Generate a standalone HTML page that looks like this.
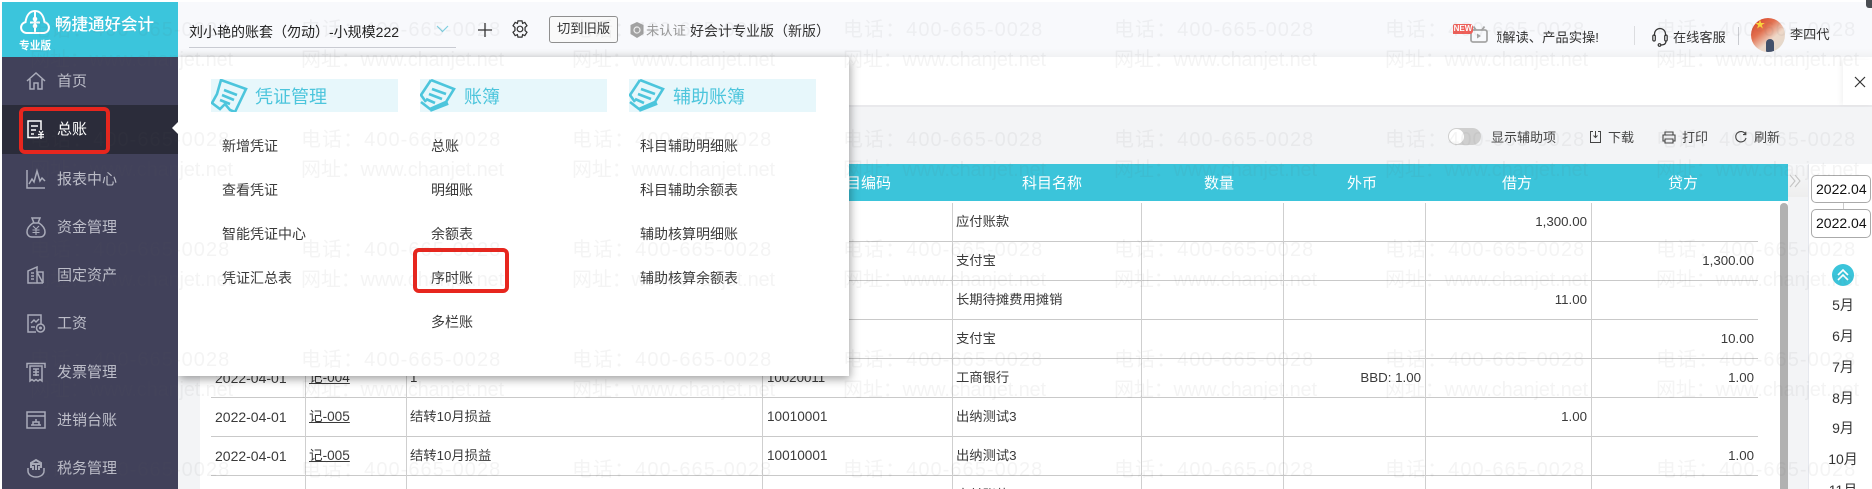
<!DOCTYPE html>
<html lang="zh"><head><meta charset="utf-8"><title>畅捷通好会计</title>
<style>
*{box-sizing:border-box;margin:0;padding:0}
html,body{width:1872px;height:489px;overflow:hidden;background:#fff;font-family:"Liberation Sans","Noto Sans CJK SC",sans-serif;color:#333}
#page{position:relative;width:1872px;height:489px;overflow:hidden}
.a{position:absolute}
.t{position:absolute;white-space:nowrap;line-height:20px;height:20px}
svg{position:absolute;overflow:visible}
.h{background:#c9c9c9;height:1px;left:211px;width:1547px}
.v{background:#cfcfcf;width:1px;top:203px;height:286px}
.c{font-size:13.3px;color:#3a3a3a}
.r{font-size:13.3px;color:#3a3a3a;text-align:right;width:120px}
.d{font-size:14px;left:215px;color:#3a3a3a}
.u{font-size:13.6px;left:309px;text-decoration:underline;color:#3a3a3a}
.th{color:#fff;font-size:15px;top:174px}
.m{font-size:14px;color:#3a3a3a}
.sec{position:absolute;top:79px;height:33px;width:187px;background:#e7f7fb;overflow:hidden}
.sec b{position:absolute;top:7px;font-weight:400;font-size:18px;line-height:22px;color:#4cc5dc;white-space:nowrap}
.sec svg{fill:none;stroke:#4cc5dc;stroke-width:2.6;left:0;top:0}
.mon{left:1818px;width:50px;text-align:center;font-size:14px;color:#333}
.box{position:absolute;border:4px solid #e7261e;border-radius:6px}
.tool{font-size:13px;color:#444}
#wm{position:absolute;left:0;top:0;width:1872px;height:489px;overflow:hidden;pointer-events:none;z-index:50}
#wm div{position:absolute;left:-241px;white-space:nowrap;font-size:20px;line-height:24px;color:rgba(95,95,105,.07)}
#wm .p{letter-spacing:1.05px}
#wm .w{letter-spacing:-.15px}
#wm span{display:inline-block;width:271px}
#sideinner svg.i{fill:none;stroke:#a9abb9;stroke-width:1.5;left:26px}
#sideinner .n{color:#bcbdc8;font-size:15px;left:57px}
</style></head><body>
<div id="page">

<!-- base layers -->
<div class="a" style="left:178px;top:2px;width:1694px;height:55px;background:linear-gradient(#f8f9fc 85%,#f1f2f4)"></div>
<div class="a" style="left:178px;top:57px;width:1694px;height:48px;background:#fff"></div>
<div class="a" style="left:178px;top:105px;width:1694px;height:2px;background:#e9e9ec"></div>
<div class="a" style="left:178px;top:107px;width:1694px;height:382px;background:#f3f4f6"></div>
<div class="a" style="left:200px;top:164px;width:1588px;height:325px;background:#fff"></div>
<div class="a" style="left:1843px;top:60px;width:29px;height:45px;background:#fff;box-shadow:-3px 0 4px rgba(0,0,0,.04)"></div>
<div class="a" style="left:1866px;top:0;width:6px;height:8px;background:#4a4d52;border-radius:0 0 0 3px"></div>

<!-- top bar -->
<div class="t" style="left:189px;top:22px;font-size:14px;color:#222">刘小艳的账套（勿动）-小规模222</div>
<div class="a" style="left:189px;top:47px;width:267px;height:1px;background:#c9cbd2"></div>
<svg style="left:436px;top:25px" width="13" height="8" fill="none" stroke="#7fd0e2" stroke-width="1.2"><path d="M1 1l5.5 5.5L12 1"/></svg>
<svg style="left:478px;top:23px" width="14" height="14" fill="none" stroke="#333" stroke-width="1.3"><path d="M7 0v14M0 7h14"/></svg>
<svg style="left:511px;top:20px" width="18" height="18" viewBox="0 0 16 16" fill="none" stroke="#333" stroke-width="1.1"><path d="M6.2.8h3.6l.5 2.2 2-.9 1.9 3-1.7 1.5v2.8l1.7 1.5-1.9 3-2-.9-.5 2.2H6.2l-.5-2.2-2 .9-1.9-3 1.7-1.5V6.6L1.800 5.100l1.900-3 2 .9z"/><circle cx="8" cy="8" r="2.5"/></svg>
<div class="a" style="left:549px;top:16px;width:69px;height:27px;border:1px solid #8f8f8f;border-radius:3px;background:#f9f9f9"></div>
<div class="t" style="left:557px;top:19px;font-size:13.3px;color:#333">切到旧版</div>
<svg style="left:630px;top:22px" width="14" height="16" viewBox="0 0 14 16"><path d="M7 0l6.5 3v9L7 16 .5 12V3z" fill="#a2a2a2"/><circle cx="7" cy="8" r="3" fill="none" stroke="#eee" stroke-width="1.2"/></svg>
<div class="t" style="left:646px;top:21px;font-size:13.3px;color:#999">未认证</div>
<div class="t" style="left:690px;top:21px;font-size:14px;color:#333">好会计专业版（新版）</div>

<svg style="left:1470px;top:25px" width="18" height="18" viewBox="0 0 18 18" fill="none" stroke="#a5a5a5" stroke-width="1.8"><rect x="1" y="5" width="16" height="12" rx="2"/><path d="M6 5L3.500 1.500M12 5l2.500-3.500"/><path d="M7 8.500l4 2.500-4 2.500z" fill="#a5a5a5" stroke="none"/></svg>
<div class="a" style="left:1453px;top:24px;width:20px;height:10px;background:#f0605a;border-radius:2px 3px 3px 0;color:#fff;font-size:8px;line-height:10px;font-weight:700;text-align:center">NEW</div>
<div class="a" style="left:1497px;top:28px;width:102px;height:20px;overflow:hidden"><div class="t" style="right:0;font-size:13.3px;color:#333">视频解读、产品实操!</div></div>
<div class="a" style="left:1634px;top:26px;width:1px;height:19px;background:#dcdde0"></div>
<svg style="left:1652px;top:27px" width="16" height="21" viewBox="0 0 16 21" fill="none" stroke="#333" stroke-width="1.2"><path d="M2.500 9V7a5.500 5.500 0 0 1 11 0v2"/><rect x=".8" y="8" width="2.500" height="6" rx="1.200"/><rect x="12.700" y="8" width="2.500" height="6" rx="1.200"/><path d="M14 14c0 3-2 4-5 4"/><circle cx="7.500" cy="18" r="1.300"/></svg>
<div class="t" style="left:1673px;top:28px;font-size:13.2px;color:#333">在线客服</div>
<div class="a" style="left:1738px;top:27px;width:1px;height:18px;background:#c9cbd0"></div>
<div class="a" style="left:1751px;top:18px;width:34px;height:34px;border-radius:50%;overflow:hidden;background:linear-gradient(140deg,#d83a22 0,#e2704f 35%,#eed8c8 62%,#ddd8cc 100%)"><div class="a" style="left:15px;top:21px;width:8px;height:13px;background:#42506a;border-radius:4px 4px 1px 1px"></div><div class="a" style="left:4px;top:3px;color:#f8d33c;font-size:10px;line-height:10px">★</div></div>
<div class="t" style="left:1790px;top:25px;font-size:13.2px;color:#333">李四代</div>

<!-- close -->
<svg style="left:1855px;top:77px" width="10" height="10" fill="none" stroke="#333" stroke-width="1.2"><path d="M0 0l10 10M10 0L0 10"/></svg>

<!-- toolbar -->
<div class="a" style="left:1448px;top:128px;width:33px;height:17px;border-radius:9px;background:#cfcfcf"></div>
<div class="a" style="left:1449px;top:129px;width:15px;height:15px;border-radius:50%;background:#fff"></div>
<div class="t tool" style="left:1491px;top:128px">显示辅助项</div>
<svg style="left:1590px;top:131px" width="11" height="12" viewBox="0 0 11 12" fill="none" stroke="#444" stroke-width="1"><path d="M3 .5H.5v11h10V.5H8M5.500 0v6.500M3.500 4.500l2 2 2-2"/></svg>
<div class="t tool" style="left:1608px;top:128px">下载</div>
<svg style="left:1662px;top:131px" width="14" height="13" viewBox="0 0 14 13" fill="none" stroke="#444" stroke-width="1.1"><path d="M3 4V1h8v3M3 10H1V4h12v6h-2M3 8h8v4H3z"/></svg>
<div class="t tool" style="left:1682px;top:128px">打印</div>
<svg style="left:1735px;top:131px" width="12" height="12" viewBox="0 0 12 12" fill="none" stroke="#444" stroke-width="1.1"><path d="M10.500 3.200A5.200 5.200 0 1 0 11 7M10.800 .8v2.800H8"/></svg>
<div class="t tool" style="left:1754px;top:128px">刷新</div>

<!-- table -->
<div class="a" style="left:200px;top:164px;width:1588px;height:37px;background:#3bc4da"></div>
<div class="t th" style="left:831px">科目编码</div>
<div class="t th" style="left:1022px">科目名称</div>
<div class="t th" style="left:1204px">数量</div>
<div class="t th" style="left:1347px">外币</div>
<div class="t th" style="left:1502px">借方</div>
<div class="t th" style="left:1668px">贷方</div>

<div class="a h" style="top:241px"></div><div class="a h" style="top:280px"></div><div class="a h" style="top:319px"></div><div class="a h" style="top:358px"></div><div class="a h" style="top:397px"></div><div class="a h" style="top:436px"></div><div class="a h" style="top:475px"></div>
<div class="a v" style="left:305px"></div><div class="a v" style="left:406px"></div><div class="a v" style="left:762px"></div><div class="a v" style="left:952px"></div><div class="a v" style="left:1141px"></div><div class="a v" style="left:1283px"></div><div class="a v" style="left:1425px"></div><div class="a v" style="left:1591px"></div>

<div class="t c" style="left:956px;top:212px">应付账款</div><div class="t r" style="left:1467px;top:212px">1,300.00</div>
<div class="t c" style="left:956px;top:251px">支付宝</div><div class="t r" style="left:1634px;top:251px">1,300.00</div>
<div class="t c" style="left:956px;top:290px">长期待摊费用摊销</div><div class="t r" style="left:1467px;top:290px">11.00</div>
<div class="t c" style="left:956px;top:329px">支付宝</div><div class="t r" style="left:1634px;top:329px">10.00</div>
<div class="t d" style="top:368px">2022-04-01</div><div class="t u" style="top:368px">记-004</div><div class="t c" style="left:410px;top:368px">1</div><div class="t c" style="left:767px;top:368px">10020011</div><div class="t c" style="left:956px;top:368px">工商银行</div><div class="t r" style="left:1301px;top:368px">BBD: 1.00</div><div class="t r" style="left:1634px;top:368px">1.00</div>
<div class="t d" style="top:407px">2022-04-01</div><div class="t u" style="top:407px">记-005</div><div class="t c" style="left:410px;top:407px">结转10月损益</div><div class="t c" style="left:767px;top:407px;font-size:13.6px">10010001</div><div class="t c" style="left:956px;top:407px">出纳测试3</div><div class="t r" style="left:1467px;top:407px">1.00</div>
<div class="t d" style="top:446px">2022-04-01</div><div class="t u" style="top:446px">记-005</div><div class="t c" style="left:410px;top:446px">结转10月损益</div><div class="t c" style="left:767px;top:446px;font-size:13.6px">10010001</div><div class="t c" style="left:956px;top:446px">出纳测试3</div><div class="t r" style="left:1634px;top:446px">1.00</div>
<div class="t c" style="left:956px;top:485px">应付账款</div>

<!-- scrollbar + right -->
<div class="a" style="left:1780px;top:203px;width:8px;height:286px;background:#b1b1b1;border-radius:4px 4px 0 0"></div>
<div class="a" style="left:1788px;top:201px;width:20px;height:288px;background:#f3f4f6"></div>
<div class="a" style="left:1788px;top:164px;width:20px;height:33px;background:linear-gradient(#f7f8fa,#eeeeee)"></div>
<svg style="left:1789px;top:175px" width="12" height="12" fill="none" stroke="#c4c4c4" stroke-width="1.1"><path d="M1 0l5 6-5 6M6 0l5 6-5 6"/></svg>
<div class="a" style="left:1808px;top:164px;width:64px;height:325px;background:#fff;border-left:1px solid #e6e8ee"></div>
<div class="a" style="left:1843px;top:200px;width:1px;height:12px;background:#ccc"></div>
<div class="a" style="left:1811px;top:175px;width:60px;height:28px;background:#fff;border:1px solid #aaa;border-radius:5px"></div>
<div class="a" style="left:1811px;top:209px;width:60px;height:29px;background:#fff;border:1px solid #aaa;border-radius:5px"></div>
<div class="t" style="left:1816px;top:179px;font-size:14px;color:#111">2022.04</div>
<div class="t" style="left:1816px;top:213px;font-size:14px;color:#111">2022.04</div>
<div class="a" style="left:1832px;top:264px;width:22px;height:22px;border-radius:50%;background:#3bc4da"></div>
<svg style="left:1837px;top:269px" width="12" height="12" fill="none" stroke="#fff" stroke-width="1.6"><path d="M1 6l5-5 5 5M1 11l5-5 5 5"/></svg>
<div class="t mon" style="top:295px">5月</div><div class="t mon" style="top:326px">6月</div><div class="t mon" style="top:357px">7月</div><div class="t mon" style="top:388px">8月</div><div class="t mon" style="top:418px">9月</div><div class="t mon" style="top:449px">10月</div><div class="t mon" style="top:480px">11月</div>

<!-- dropdown -->
<div class="a" style="left:178px;top:57px;width:671px;height:319px;background:#fff;box-shadow:1px 3px 9px rgba(0,0,0,.38);z-index:5"></div>
<div style="position:absolute;left:0;top:0;z-index:6">
<div class="sec" style="left:211px"><svg width="36" height="33" viewBox="0 0 36 33"><path d="M10 1L35 10 24 33l-5-2-5-6-5 5-8-6 5-9z"/><path d="M13 11l13 5M11 16l12 5M9 21l10 4"/></svg><b style="left:44px">凭证管理</b></div>
<div class="sec" style="left:420px"><svg width="36" height="33" viewBox="0 0 36 33"><path d="M11 1l23 9-8 13-16 7-9-7"/><path d="M11 1L1 16l5 7"/><path d="M12 10l14 5M9 15l13 5M6 20l9 4"/><path d="M10 31l18-7" stroke-width="4"/></svg><b style="left:44px">账簿</b></div>
<div class="sec" style="left:629px"><svg width="36" height="33" viewBox="0 0 36 33"><path d="M11 1l23 9-8 13-16 7-9-7"/><path d="M11 1L1 16l5 7"/><path d="M12 10l14 5M9 15l13 5M6 20l9 4"/><path d="M10 31l18-7" stroke-width="4"/></svg><b style="left:44px">辅助账簿</b></div>
<div class="t m" style="left:222px;top:136px">新增凭证</div><div class="t m" style="left:222px;top:180px">查看凭证</div><div class="t m" style="left:222px;top:224px">智能凭证中心</div><div class="t m" style="left:222px;top:268px">凭证汇总表</div>
<div class="t m" style="left:431px;top:136px">总账</div><div class="t m" style="left:431px;top:180px">明细账</div><div class="t m" style="left:431px;top:224px">余额表</div><div class="t m" style="left:431px;top:268px">序时账</div><div class="t m" style="left:431px;top:312px">多栏账</div>
<div class="t m" style="left:640px;top:136px">科目辅助明细账</div><div class="t m" style="left:640px;top:180px">科目辅助余额表</div><div class="t m" style="left:640px;top:224px">辅助核算明细账</div><div class="t m" style="left:640px;top:268px">辅助核算余额表</div>
<div class="box" style="left:413px;top:248px;width:96px;height:45px"></div>
</div>

<!-- sidebar -->
<div class="a" style="left:2px;top:2px;width:176px;height:487px;z-index:7;background:#41415a"></div>
<div class="a" id="sideinner" style="left:0;top:0;z-index:8">
<div class="a" style="left:2px;top:2px;width:176px;height:55px;background:#3bc5dc"></div>
<svg style="left:20px;top:10px" width="30" height="24" viewBox="0 0 30 24" fill="none" stroke="#fff" stroke-width="2"><path d="M8 23H6.500a5.500 5.500 0 0 1-1-10.900C6.500 5 10 1 15 1s8.500 4 9.500 11.100a5.500 5.500 0 0 1-1 10.900H8z"/><path d="M15 1v22"/><circle cx="15" cy="9" r="2.300" fill="#fff" stroke="none"/><circle cx="15" cy="16" r="2.300" fill="#fff" stroke="none"/><path d="M10 12.500h10"/></svg>
<div class="t" style="left:55px;top:15px;font-size:16.5px;color:#fff;font-weight:500">畅捷通好会计</div>
<div class="t" style="left:19px;top:36px;font-size:10.7px;color:#fff;font-weight:700">专业版</div>
<div class="a" style="left:2px;top:105px;width:176px;height:49px;background:#2b2c3a"></div>
<div class="a" style="left:172px;top:122px;width:0;height:0;border-top:6px solid transparent;border-bottom:6px solid transparent;border-right:6px solid #fff"></div>
<div class="box" style="left:19px;top:107px;width:91px;height:47px;z-index:2"></div>
<svg class="i" style="top:71px" width="20" height="20" viewBox="0 0 20 20"><path d="M1 10L10 2l9 8M4 8v10h4v-6h4v6h4V8"/></svg><div class="t n" style="top:72px">首页</div>
<svg class="i" style="top:119px;stroke:#fff" width="20" height="21" viewBox="0 0 20 21"><path d="M13 18.500H2V2h13v9M5 7h7M5 11h5M5 15h3"/><path d="M13 12l2 2.500 2-2.500M12 15.500h6M12 18h6M15 14.500V20" stroke-width="1.2"/></svg><div class="t n" style="top:120px;color:#fff">总账</div>
<svg class="i" style="top:169px" width="20" height="20" viewBox="0 0 20 20"><path d="M1 1v18h18M3 15l3-5 2 3 3-11 3 10 2-3 3 3"/></svg><div class="t n" style="top:170px">报表中心</div>
<svg class="i" style="top:217px" width="20" height="21" viewBox="0 0 20 21"><path d="M6 1h8l-2 5h-4zM7 6h6c3 2 6 5 6 9 0 3-2 5-5 5H6c-3 0-5-2-5-5 0-4 3-7 6-9z"/><path d="M7 9l3 3 3-3M6.500 13h7M6.500 15.500h7M10 12v6" stroke-width="1.1"/></svg><div class="t n" style="top:218px">资金管理</div>
<svg class="i" style="top:265px" width="20" height="20" viewBox="0 0 20 20"><path d="M2 18V6l9-4v16zM11 7h6v11zM2 18h15M17 7v11M5 8h3M5 11h3M5 14h3"/></svg><div class="t n" style="top:266px">固定资产</div>
<svg class="i" style="top:313px" width="20" height="20" viewBox="0 0 20 20"><path d="M10 19H2V2h13v9M5 10l3-3 2 2 3-3M5 14h4"/><circle cx="14.500" cy="15" r="4"/><circle cx="14.500" cy="15" r="1.500" fill="#a9abb9" stroke="none"/></svg><div class="t n" style="top:314px">工资</div>
<svg class="i" style="top:362px" width="20" height="20" viewBox="0 0 20 20"><path d="M1 6V1.500h18V6M4 4h12v15l-2-1.500-2 1.500-2-1.500L8 19l-2-1.500L4 19zM7 7h6M7 10h6M7 13h6M10 7v7"/></svg><div class="t n" style="top:363px">发票管理</div>
<svg class="i" style="top:410px" width="20" height="20" viewBox="0 0 20 20"><path d="M1 2h18v16H1zM1 6h18M5 15h10M7 15v-3h6v3M10 9v3"/></svg><div class="t n" style="top:411px">进销台账</div>
<svg class="i" style="top:458px" width="20" height="20" viewBox="0 0 20 20"><path d="M2 10v3c0 3.500 3.500 6 8 6s8-2.500 8-6v-3"/><path d="M5 10V5l5-3 5 3v5M4 6h12M7 8v4M13 8v4M10 5v7" stroke-width="2"/></svg><div class="t n" style="top:459px">税务管理</div>
</div>

<!-- watermark -->
<div id="wm">
<div class="p" style="top:18px"><span>电话：400-665-0028</span><span>电话：400-665-0028</span><span>电话：400-665-0028</span><span>电话：400-665-0028</span><span>电话：400-665-0028</span><span>电话：400-665-0028</span><span>电话：400-665-0028</span><span>电话：400-665-0028</span></div>
<div class="w" style="top:48px"><span>网址：www.chanjet.net</span><span>网址：www.chanjet.net</span><span>网址：www.chanjet.net</span><span>网址：www.chanjet.net</span><span>网址：www.chanjet.net</span><span>网址：www.chanjet.net</span><span>网址：www.chanjet.net</span><span>网址：www.chanjet.net</span></div>
<div class="p" style="top:128px"><span>电话：400-665-0028</span><span>电话：400-665-0028</span><span>电话：400-665-0028</span><span>电话：400-665-0028</span><span>电话：400-665-0028</span><span>电话：400-665-0028</span><span>电话：400-665-0028</span><span>电话：400-665-0028</span></div>
<div class="w" style="top:158px"><span>网址：www.chanjet.net</span><span>网址：www.chanjet.net</span><span>网址：www.chanjet.net</span><span>网址：www.chanjet.net</span><span>网址：www.chanjet.net</span><span>网址：www.chanjet.net</span><span>网址：www.chanjet.net</span><span>网址：www.chanjet.net</span></div>
<div class="p" style="top:238px"><span>电话：400-665-0028</span><span>电话：400-665-0028</span><span>电话：400-665-0028</span><span>电话：400-665-0028</span><span>电话：400-665-0028</span><span>电话：400-665-0028</span><span>电话：400-665-0028</span><span>电话：400-665-0028</span></div>
<div class="w" style="top:268px"><span>网址：www.chanjet.net</span><span>网址：www.chanjet.net</span><span>网址：www.chanjet.net</span><span>网址：www.chanjet.net</span><span>网址：www.chanjet.net</span><span>网址：www.chanjet.net</span><span>网址：www.chanjet.net</span><span>网址：www.chanjet.net</span></div>
<div class="p" style="top:348px"><span>电话：400-665-0028</span><span>电话：400-665-0028</span><span>电话：400-665-0028</span><span>电话：400-665-0028</span><span>电话：400-665-0028</span><span>电话：400-665-0028</span><span>电话：400-665-0028</span><span>电话：400-665-0028</span></div>
<div class="w" style="top:378px"><span>网址：www.chanjet.net</span><span>网址：www.chanjet.net</span><span>网址：www.chanjet.net</span><span>网址：www.chanjet.net</span><span>网址：www.chanjet.net</span><span>网址：www.chanjet.net</span><span>网址：www.chanjet.net</span><span>网址：www.chanjet.net</span></div>
<div class="p" style="top:458px"><span>电话：400-665-0028</span><span>电话：400-665-0028</span><span>电话：400-665-0028</span><span>电话：400-665-0028</span><span>电话：400-665-0028</span><span>电话：400-665-0028</span><span>电话：400-665-0028</span><span>电话：400-665-0028</span></div>
</div>

</div>
</body></html>
